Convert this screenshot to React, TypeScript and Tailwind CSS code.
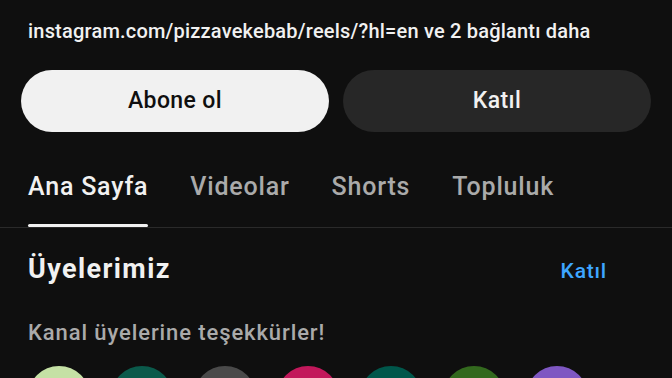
import React from "react";

const circles = ["#c5e1a5", "#0b5a4b", "#4a4a4a", "#c2185b", "#00574b", "#33691e", "#7e57c2"];

export default function App() {
  return (
    <div
      className="w-[672px] h-[378px] overflow-hidden bg-[#0f0f0f] text-[#f1f1f1]"
      style={{ fontFamily: "Roboto, 'Noto Sans', sans-serif" }}
    >
      <div className="px-[28px] pt-[19px] text-[20px] leading-[24px] tracking-[0.2px] font-medium text-[#f1f1f1] whitespace-nowrap">
        instagram.com/pizzavekebab/reels/?hl=en ve 2 bağlantı daha
      </div>
      <div className="mt-[27px] px-[21px] flex gap-[14px]">
        <div className="flex-1 h-[62px] rounded-full bg-[#f1f1f1] text-[#0f0f0f] flex items-center justify-center text-[23px] tracking-[0.4px] font-medium">
          Abone ol
        </div>
        <div className="flex-1 h-[62px] rounded-full bg-[#272727] text-[#f1f1f1] flex items-center justify-center text-[23px] tracking-[0.4px] font-medium">
          Katıl
        </div>
      </div>
      <div className="mt-[39px] px-[28px] flex gap-[42px] text-[25px] leading-[32px] tracking-[0.8px] font-medium">
        <div className="flex flex-col">
          <span className="text-[#f1f1f1]">Ana Sayfa</span>
          <div className="mt-[21px] h-[3px] rounded-full bg-[#f1f1f1]" />
        </div>
        <span className="text-[#aaaaaa]">Videolar</span>
        <span className="text-[#aaaaaa]">Shorts</span>
        <span className="text-[#aaaaaa]">Topluluk</span>
      </div>
      <div className="h-px bg-[#2a2a2a]" />
      <div className="mt-[25px] pl-[28px] pr-[65px] flex items-baseline justify-between">
        <span className="text-[27px] leading-[32px] tracking-[1.4px] font-bold text-[#f1f1f1]">Üyelerimiz</span>
        <span className="text-[21px] leading-[28px] tracking-[0.8px] font-medium text-[#3ea6ff]">Katıl</span>
      </div>
      <div className="mt-[34px] px-[28px] text-[22px] leading-[28px] tracking-[0.9px] font-medium text-[#aaaaaa] whitespace-nowrap">
        Kanal üyelerine teşekkürler!
      </div>
      <div className="mt-[19px] pl-[28px] flex gap-[21px]">
        {circles.map((c, i) => (
          <div key={i} className="w-[62px] h-[62px] rounded-full shrink-0" style={{ backgroundColor: c }} />
        ))}
      </div>
    </div>
  );
}
